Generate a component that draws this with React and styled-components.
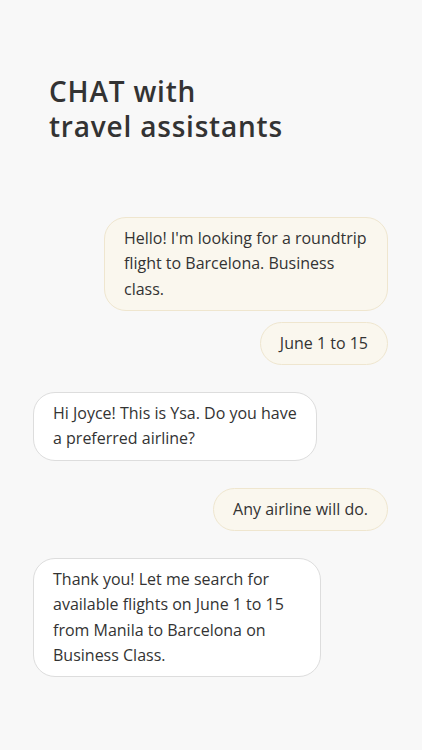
import React from 'react'
import styled, { createGlobalStyle } from 'styled-components'

const GlobalStyle = createGlobalStyle`
html, body {
    margin: 0;
    padding: 0;
    background: #f8f8f8;
}
`

const messages = [
    { me: true, w: 284, text: "Hello! I'm looking for a roundtrip flight to Barcelona. Business class." },
    { me: true, text: 'June 1 to 15' },
    { me: false, w: 284, text: 'Hi Joyce! This is Ysa. Do you have a preferred airline?' },
    { me: true, text: 'Any airline will do.' },
    { me: false, w: 288, text: 'Thank you! Let me search for available flights on June 1 to 15 from Manila to Barcelona on Business Class.' },
]

function App() {
    return (
        <Page>
            <GlobalStyle />
            <Title>
                CHAT with
                <br />
                travel assistants
            </Title>
            <Thread>
                {messages.map((m, i) => {
                    const prev = messages[i - 1]
                    const same = prev && prev.me === m.me
                    return (
                        <Bubble key={i} $me={m.me} $w={m.w} $tight={same} $first={i === 0}>
                            {m.text}
                        </Bubble>
                    )
                })}
            </Thread>
        </Page>
    )
}

export default App

const Page = styled.div`
width: 422px;
height: 750px;
background: #f8f8f8;
box-sizing: border-box;
padding: 74px 34px 0 33px;
overflow: hidden;
`

const Title = styled.h1`
margin: 0 0 0 16px;
font-family: 'Open Sans', 'Noto Sans', sans-serif;
font-weight: 600;
font-size: 28px;
line-height: 35px;
letter-spacing: 0.8px;
color: #333333;
`

const Thread = styled.div`
display: flex;
flex-direction: column;
margin-top: 73px;
`

const Bubble = styled.div`
box-sizing: border-box;
align-self: ${props => (props.$me ? 'flex-end' : 'flex-start')};
width: ${props => (props.$w ? `${props.$w}px` : 'auto')};
margin-top: ${props => (props.$first ? '0' : props.$tight ? '11px' : '27px')};
padding: 8px 19px 8px 19px;
border-radius: 22px;
border: 1px solid ${props => (props.$me ? '#efe6cf' : '#dddddd')};
background: ${props => (props.$me ? '#faf7ee' : '#ffffff')};
font-family: 'Open Sans', 'Noto Sans', sans-serif;
font-size: 16px;
line-height: 25.3px;
color: #333333;
`
